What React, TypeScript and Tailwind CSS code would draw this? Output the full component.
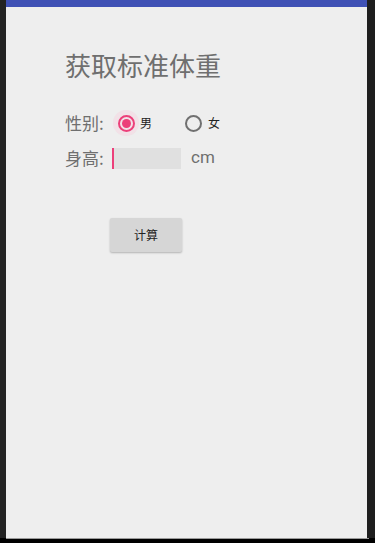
export default function App() {
  return (
    <div className="w-[375px] h-[543px] bg-black flex flex-col overflow-hidden" style={{ fontFamily: '"Noto Sans CJK SC", Roboto, sans-serif' }}>
      <div className="flex h-[538px]">
        <div className="w-[6px] bg-[#232323]" />
        <div className="flex-1 flex flex-col bg-[#eeeeee]">
          <div className="h-[7px] bg-[#3f51b5]" />
          <div className="flex flex-col pl-[59px]">
            <div className="mt-[41px] text-[26px] leading-[34px] text-[#6f6f6f]">获取标准体重</div>
            <div className="mt-[26px] flex items-center h-[30px]">
              <span className="text-[17px] text-[#6f6f6f] w-[45px]">性别:</span>
              <div className="relative w-[26px] h-[26px] flex items-center justify-center ml-[3px]">
                <div className="absolute inset-0 rounded-full bg-[#f6d3df] opacity-50" />
                <div className="relative w-[17px] h-[17px] rounded-full border-2 border-[#ec407a] flex items-center justify-center">
                  <div className="w-[9px] h-[9px] rounded-full bg-[#ec407a]" />
                </div>
              </div>
              <span className="text-[12px] text-[#222] ml-[1px]">男</span>
              <div className="w-[17px] h-[17px] rounded-full border-2 border-[#707070] ml-[33px]" />
              <span className="text-[12px] text-[#222] ml-[6px]">女</span>
            </div>
            <div className="mt-[7px] flex items-center h-[26px]">
              <span className="text-[17px] text-[#6f6f6f] w-[47px]">身高:</span>
              <div className="w-[69px] h-[21px] bg-[#e0e0e0] flex">
                <div className="w-[2px] h-full bg-[#ec407a]" />
              </div>
              <span className="text-[17px] text-[#6f6f6f] ml-[10px]" style={{ fontFamily: 'Roboto, sans-serif' }}>cm</span>
            </div>
            <div className="mt-[47px] ml-[45px] w-[72px] h-[34px] bg-[#d6d6d6] rounded-[2px] shadow-[0_1px_2px_rgba(0,0,0,0.25)] flex items-center justify-center text-[12px] text-[#222]">
              计算
            </div>
          </div>
        </div>
        <div className="w-[8px] bg-[#1e1e1e]" />
      </div>
      <div className="h-[1px] bg-[#9a9a9a] mx-[6px]" />
    </div>
  );
}
